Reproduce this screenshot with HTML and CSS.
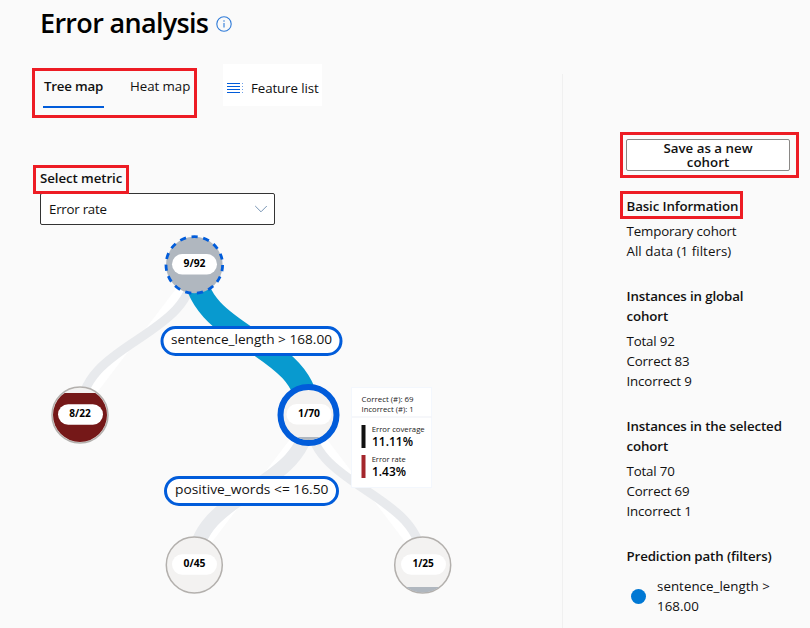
FILE: index.html
```html
<!DOCTYPE html>
<html lang="en">
<head>
<meta charset="utf-8">
<title>Error analysis</title>
<link rel="stylesheet" href="styles.css">
</head>
<body>
<div class="page">
  <main class="main">
    <header class="header">
      <h1 class="title">Error analysis</h1>
      <svg class="info" width="16" height="16" viewBox="0 0 16 16"><circle cx="8" cy="8" r="7.2"/><path d="M8 7v4.6M8 4.3v1.4"/></svg>
    </header>
    <div class="toolbar">
      <nav class="tabs">
        <a class="tab tab-active">Tree map</a>
        <a class="tab tab-heat">Heat map</a>
      </nav>
      <button class="feature-button">
        <svg width="17" height="12" viewBox="0 0 17 12"><path class="bars" d="M0 1.5h13M0 4.5h13M0 7.5h13M0 10.5h13"/><path class="dots" d="M15 1.5h1M15 4.5h1M15 7.5h1M15 10.5h1"/></svg>
        <span class="feature-text">Feature list</span>
      </button>
    </div>
    <label class="metric-label">Select metric</label>
    <div class="dropdown">
      <span class="dropdown-text">Error rate</span>
      <svg width="14" height="8" viewBox="0 0 14 8"><path d="M1.2 1L7 6.8L12.8 1"/></svg>
    </div>
    <svg class="tree" width="562" height="403" viewBox="0 225 562 403">
      <defs>
        <clipPath id="leftClip"><circle cx="80" cy="415" r="27"/></clipPath>
        <clipPath id="selectedClip"><circle cx="308.5" cy="415" r="25"/></clipPath>
        <clipPath id="rightClip"><circle cx="422.7" cy="565" r="27.5"/></clipPath>
      </defs>
      <path class="link" stroke-width="9" d="M194 265C194 340 80 340 80 415"/>
      <path class="link" stroke-width="14.5" d="M308.5 415C308.5 490 194.5 490 194.5 565"/>
      <path class="link" stroke-width="9" d="M308.5 415C308.5 490 422.7 490 422.7 565"/>
      <path class="link link-selected" stroke-width="22.5" d="M194 265C194 340 308.5 340 308.5 415"/>

      <circle class="root" cx="194.3" cy="265" r="28.3"/>
      <rect class="pill" x="172" y="254" width="45" height="20.5" rx="10.2"/>
      <text class="count" x="183.5" y="267.4" textLength="22" lengthAdjust="spacingAndGlyphs">9/92</text>

      <circle class="node" cx="80" cy="415" r="28"/>
      <rect class="error-fill" x="50" y="393" width="60" height="52" clip-path="url(#leftClip)"/>
      <rect class="pill" x="58" y="404.3" width="45" height="20.5" rx="10.2"/>
      <text class="count" x="69.3" y="417.4" textLength="21.5" lengthAdjust="spacingAndGlyphs">8/22</text>

      <circle class="selected" cx="308.5" cy="415" r="28"/>
      <rect class="low-fill" x="280" y="437" width="57" height="3" clip-path="url(#selectedClip)"/>
      <rect class="pill" x="286.5" y="404" width="45" height="20.5" rx="10.2"/>
      <text class="count" x="298" y="417.4" textLength="22" lengthAdjust="spacingAndGlyphs">1/70</text>

      <circle class="node" cx="194.3" cy="565" r="28"/>
      <rect class="pill" x="172" y="554.3" width="45" height="20.5" rx="10.2"/>
      <text class="count" x="183.5" y="567.4" textLength="22" lengthAdjust="spacingAndGlyphs">0/45</text>

      <circle class="node" cx="422.7" cy="565" r="28"/>
      <rect class="low-fill" x="393" y="587" width="60" height="8" clip-path="url(#rightClip)"/>
      <rect class="pill" x="401" y="554.3" width="45" height="20.5" rx="10.2"/>
      <text class="count" x="412.4" y="567.4" textLength="21.5" lengthAdjust="spacingAndGlyphs">1/25</text>

      <rect class="condition" x="162" y="327.5" width="179" height="27" rx="13.5"/>
      <text class="condition-text" x="171" y="344" textLength="161" lengthAdjust="spacingAndGlyphs">sentence_length &gt; 168.00</text>
      <rect class="condition" x="165.5" y="477.5" width="172" height="27" rx="13.5"/>
      <text class="condition-text" x="175" y="494" textLength="153.5" lengthAdjust="spacingAndGlyphs">positive_words &lt;= 16.50</text>

      <rect class="card" x="351.5" y="387.5" width="80" height="100"/>
      <path class="card-line" d="M352 417h80"/>
      <text class="small" x="361.6" y="402" textLength="52" lengthAdjust="spacingAndGlyphs">Correct (#): 69</text>
      <text class="small" x="361.6" y="412" textLength="52" lengthAdjust="spacingAndGlyphs">Incorrect (#): 1</text>
      <rect class="bar-coverage" x="361.5" y="425" width="4" height="23"/>
      <text class="small" x="371.7" y="432" textLength="53" lengthAdjust="spacingAndGlyphs">Error coverage</text>
      <text class="value" x="372" y="446" textLength="41" lengthAdjust="spacingAndGlyphs">11.11%</text>
      <rect class="bar-rate" x="361.5" y="455" width="4" height="23"/>
      <text class="small" x="371.7" y="462" textLength="34" lengthAdjust="spacingAndGlyphs">Error rate</text>
      <text class="value" x="372" y="476" textLength="34" lengthAdjust="spacingAndGlyphs">1.43%</text>
    </svg>
  </main>
  <aside class="side">
    <div class="save-frame"><button class="save-button">Save as a new<br>cohort</button></div>
    <h2 class="heading heading-framed">Basic Information</h2>
    <div class="lines">Temporary cohort<br><span class="wide">All data (1 filters)</span></div>
    <h2 class="heading">Instances in global<br>cohort</h2>
    <div class="lines">Total 92<br>Correct 83<br>Incorrect 9</div>
    <h2 class="heading">Instances in the selected<br>cohort</h2>
    <div class="lines">Total 70<br>Correct 69<br>Incorrect 1</div>
    <h2 class="heading heading-path">Prediction path (filters)</h2>
    <div class="filter"><span class="dot"></span><span class="wide">sentence_length &gt;<br>168.00</span></div>
  </aside>
</div>
</body>
</html>
```
FILE: styles.css
```css
* { box-sizing: border-box; }
body { margin: 0; background: #fafafa; color: #111; font: 13.3px/20px "Open Sans", "Noto Sans", sans-serif; overflow: hidden; }
.page { display: flex; width: 810px; height: 628px; }
.main { width: 562px; height: 628px; }
h1, h2 { margin: 0; }
button { font: inherit; color: inherit; }

.header { display: flex; align-items: center; gap: 8px; height: 48px; margin-left: 40px; }
.title { width: 168px; white-space: nowrap; font-size: 27px; line-height: 44px; padding-bottom: 3px; font-weight: 550; letter-spacing: -0.68px; color: #000; }
.info { fill: none; stroke: #2f7bd8; stroke-width: 1.1; }

.toolbar { display: flex; align-items: flex-start; gap: 26px; padding: 16px 0 0 32px; height: 117px; }
.tabs { display: flex; gap: 26px; width: 165px; height: 50px; margin-top: 4px; padding-left: 8px; border: 3px solid #ed1c24; }
.tab { height: 37px; line-height: 30px; white-space: nowrap; }
.tab-active { width: 61px; padding-left: 1px; border-bottom: 2px solid #015cda; font-weight: 600; letter-spacing: -0.2px; }
.tab-heat { letter-spacing: -0.05px; }
.feature-button { display: flex; align-items: center; gap: 7px; width: 99px; height: 42px; padding: 6px 0 0 4px; border: 0; background: #fff; white-space: nowrap; }
.feature-text { letter-spacing: -0.1px; }
.bars { stroke: #015cda; stroke-width: 1; }
.dots { stroke: #6c9ee6; stroke-width: 1; }

.metric-label { display: block; position: relative; width: 96px; height: 29px; margin-left: 33px; padding-left: 4px; border: 3px solid #ed1c24; font-weight: 600; line-height: 21px; letter-spacing: -0.08px; white-space: nowrap; }
.dropdown { display: flex; align-items: center; justify-content: space-between; width: 235px; height: 32px; margin: -1px 0 0 40px; padding: 0 6px 0 8px; border: 1px solid #333; border-radius: 2px; background: #fff; }
.dropdown-text { letter-spacing: -0.25px; }
.dropdown svg { fill: none; stroke: #7895b5; stroke-width: 1; }

.tree { display: block; }
.link { fill: #fff; stroke: #e8eaed; }
.link-selected { fill: none; stroke: #089acf; }
.root { fill: #b0b7bf; stroke: #015cda; stroke-width: 2.8; stroke-dasharray: 6.2 5.65; }
.node { fill: #f3f2f1; stroke: #b3b0ad; stroke-width: 1.5; }
.selected { fill: #f3f2f1; stroke: #015cda; stroke-width: 6; }
.error-fill { fill: #751818; }
.low-fill { fill: #b0b7bf; }
.pill { fill: #fff; }
.count { font-size: 9.7px; font-weight: 700; fill: #000; }
.condition { fill: #fff; stroke: #015cda; stroke-width: 3; }
.condition-text { font-size: 13.5px; fill: #111; }
.card { fill: #fff; stroke: #f3f7fd; }
.card-line { stroke: #f3f5f8; stroke-width: 1.5; }
.small { font-size: 7.7px; fill: #222; }
.value { font-size: 12.3px; font-weight: 600; fill: #000; }
.bar-coverage { fill: #111; }
.bar-rate { fill: #a4262c; }

.side { width: 248px; height: 554px; margin-top: 74px; padding: 58px 0 0 57px; border-left: 1px solid #f0f0f0; letter-spacing: -0.15px; }
.save-frame { width: 179px; height: 46px; padding: 4px 3px 0; border: 3px solid #ed1c24; }
.save-button { display: block; width: 164px; height: 32px; padding: 0; border: 1px solid #8a8886; border-radius: 2px; background: #fff; font-weight: 600; line-height: 14px; }
.heading { margin: 25px 0 5px 6.5px; font-size: 13.3px; font-weight: 600; line-height: 20px; letter-spacing: -0.12px; white-space: nowrap; }
.heading-framed { width: 123px; height: 28px; margin: 13px 0 2px; padding-left: 3.5px; border: 3px solid #ed1c24; line-height: 25px; }
.lines { margin-left: 6.5px; }
.wide { letter-spacing: 0.05px; }
.heading-path { margin-bottom: 10px; }
.filter { display: flex; align-items: center; gap: 11px; margin-left: 11px; white-space: nowrap; }
.dot { width: 15px; height: 15px; border-radius: 50%; background: #0078d4; }
```
